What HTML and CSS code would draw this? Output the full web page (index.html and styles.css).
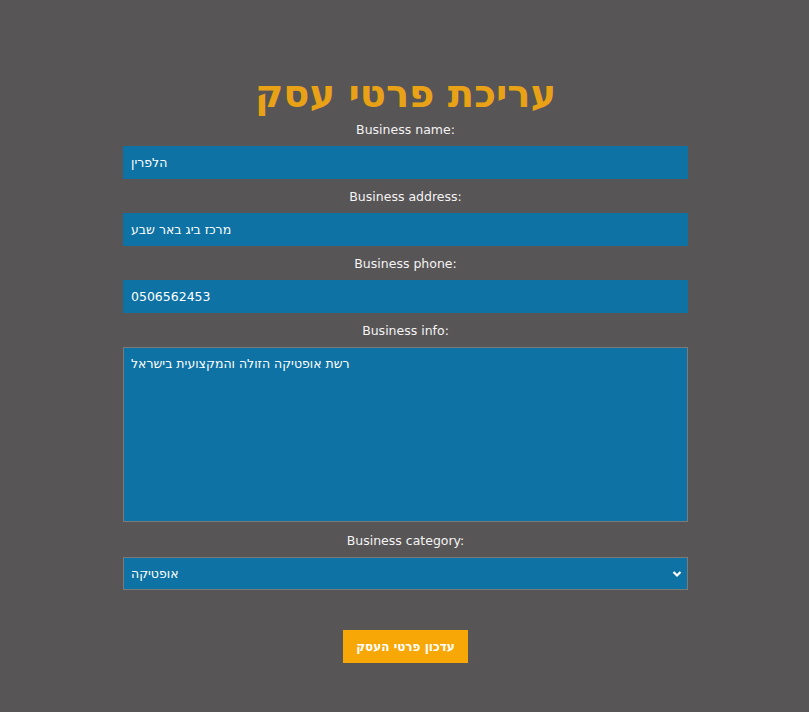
FILE: index.html
```html
<!DOCTYPE html>
<html lang="he">
<head>
<meta charset="utf-8">
<title>עריכת פרטי עסק</title>
<link rel="stylesheet" href="styles.css">
</head>
<body>
<main class="page">
  <h1 class="title">עריכת פרטי עסק</h1>
  <form class="form">
    <label class="label" for="bname">Business name:</label>
    <input class="field" id="bname" type="text" value="הלפרין">
    <label class="label" for="baddr">Business address:</label>
    <input class="field" id="baddr" type="text" value="מרכז ביג באר שבע">
    <label class="label" for="bphone">Business phone:</label>
    <input class="field" id="bphone" type="text" value="0506562453">
    <label class="label" for="binfo">Business info:</label>
    <textarea class="field area" id="binfo">רשת אופטיקה הזולה והמקצועית בישראל</textarea>
    <label class="label" for="bcat">Business category:</label>
    <div class="select-wrap">
      <select class="field select" id="bcat">
        <option>אופטיקה</option>
      </select>
      <svg class="chevron" width="10" height="8" viewBox="0 0 10 8"><path d="M1.5 2 L5 5.5 L8.5 2" fill="none" stroke="#fff" stroke-width="2.2"/></svg>
    </div>
    <div class="actions">
      <button class="btn" type="button">עדכון פרטי העסק</button>
    </div>
  </form>
</main>
</body>
</html>
```

FILE: styles.css
```css
* { box-sizing: border-box; }
html, body {
  margin: 0;
  padding: 0;
  background: #585556;
  font-family: "DejaVu Sans", Verdana, sans-serif;
  color: #fff;
}
body {
  padding-left: 2px;
}
.page {
  width: 565px;
  margin: 0 auto;
  padding-top: 67px;
  padding-bottom: 48px;
}
.title {
  margin: 0;
  text-align: center;
  color: #e9a216;
  font-size: 38.5px;
  line-height: 54px;
  font-weight: bold;
}
.form {
  display: flex;
  flex-direction: column;
}
.label {
  display: block;
  text-align: center;
  font-size: 12.5px;
  line-height: 18px;
  margin-bottom: 7px;
  color: #f4f4f4;
}
.field {
  display: block;
  width: 100%;
  height: 33px;
  margin: 0 0 9px 0;
  padding: 0 8px;
  border: 0;
  background: #0e72a4;
  color: #fff;
  font-family: "DejaVu Sans", Verdana, sans-serif;
  font-size: 12.5px;
  direction: ltr;
  text-align: left;
  outline: none;
}
.area {
  height: 175px;
  margin-bottom: 10px;
  border: 1px solid #7a7a7a;
  padding: 7px 7px;
  resize: none;
  line-height: 17px;
}
.select-wrap {
  position: relative;
  margin-bottom: 8px;
}
.select {
  appearance: none;
  -webkit-appearance: none;
  border: 1px solid #7a7a7a;
  border-radius: 0;
  margin: 0;
  padding: 0 7px;
}
.chevron {
  position: absolute;
  right: 6px;
  top: 13px;
}
.actions {
  display: flex;
  justify-content: center;
  padding-top: 32px;
}
.btn {
  width: 125px;
  height: 33px;
  border: 0;
  background: #f8a806;
  color: #fff;
  font-family: "DejaVu Sans", Verdana, sans-serif;
  font-weight: bold;
  font-size: 12px;
  cursor: pointer;
}
```
